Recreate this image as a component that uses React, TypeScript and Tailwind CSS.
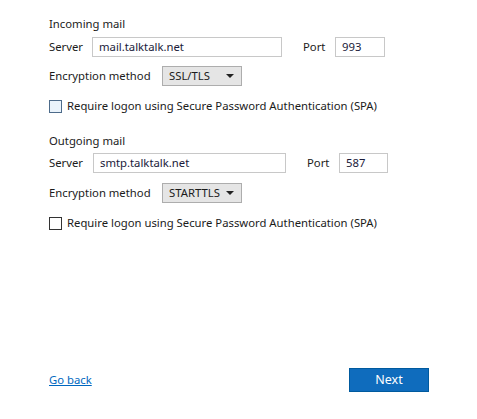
const Caret = () => (
    <svg width="8" height="4" viewBox="0 0 8 4" className="ml-auto mr-[7px] shrink-0">
        <path d="M0 0h8L4 4z" fill="#222" />
    </svg>
);

interface RowProps {
    server: string; port: string; labelW: string; inputW: string; portX: string; portW: string;
}
const ServerRow = ({ server, port, labelW, inputW, portX, portW }: RowProps) => (
    <div className="flex items-center h-[20px]">
        <span className={labelW}>Server</span>
        <div className={`${inputW} h-[20px] border border-[#c8c8c8] pl-[6px] flex items-center text-[#1a1a3a]`}>{server}</div>
        <span className={`${portX} w-[32px]`}>Port</span>
        <div className={`${portW} h-[20px] border border-[#c8c8c8] pl-[6px] flex items-center text-[#1a1a3a]`}>{port}</div>
    </div>
);

const Select = ({ value }: { value: string }) => (
    <div className="flex items-center h-[20px]">
        <span className="w-[113px]">Encryption method</span>
        <div className="w-[80px] h-[20px] border border-[#adadad] bg-[#e5e5e5] pl-[6px] flex items-center">
            {value}
            <Caret />
        </div>
    </div>
);

const Check = ({ hover }: { hover?: boolean }) => (
    <div className="flex items-center h-[13px]">
        <div className={hover ? 'w-[13px] h-[13px] border border-[#4d6b8a] bg-[#eaf3fb]' : 'w-[13px] h-[13px] border border-[#333] bg-white'} />
        <span className="ml-[5px]">Require logon using Secure Password Authentication (SPA)</span>
    </div>
);

export default function App() {
    return (
        <div className="w-[477px] h-[419px] bg-white flex flex-col pl-[49px] pt-[15px] pb-[27px] text-[11.3px] text-[#1b1b1b] font-['Noto_Sans',sans-serif]">
            <div className="h-[18px] leading-[18px]">Incoming mail</div>
            <div className="mt-[4px]">
                <ServerRow server="mail.talktalk.net" port="993" labelW="w-[43px]" inputW="w-[190px]" portX="ml-[21px]" portW="w-[50px]" />
            </div>
            <div className="mt-[9px]"><Select value="SSL/TLS" /></div>
            <div className="mt-[14px]"><Check hover /></div>

            <div className="mt-[19px] h-[18px] leading-[18px]">Outgoing mail</div>
            <div className="mt-[3px]">
                <ServerRow server="smtp.talktalk.net" port="587" labelW="w-[44px]" inputW="w-[193px]" portX="ml-[21px]" portW="w-[49px]" />
            </div>
            <div className="mt-[10px]"><Select value="STARTTLS" /></div>
            <div className="mt-[14px]"><Check /></div>

            <div className="mt-auto flex items-center pr-[48px]">
                <a href="#" className="text-[#0067c0] underline">Go back</a>
                <button className="ml-auto w-[80px] h-[24px] bg-[#0f6cbd] border border-[#005a9e] text-white text-[12.5px]">Next</button>
            </div>
        </div>
    );
}
